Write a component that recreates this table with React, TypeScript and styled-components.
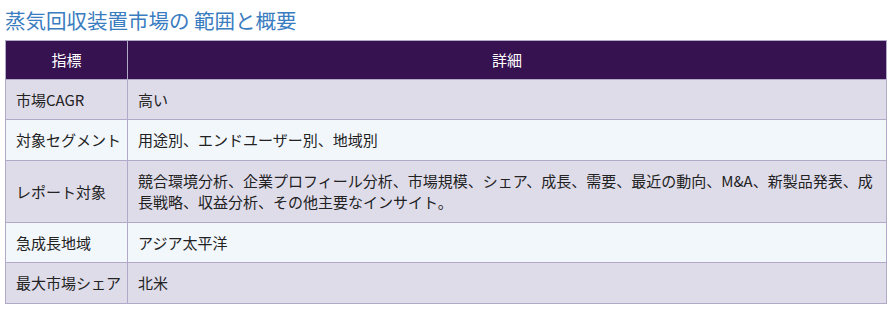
import React from "react";
import styled, { createGlobalStyle } from "styled-components";

const GlobalStyle = createGlobalStyle`
  body {
    margin: 0;
    background: #ffffff;
    font-family: "Noto Sans CJK JP", "Liberation Sans", sans-serif;
  }
`;

const Page = styled.div`
  padding: 8px 8px 0 5px;
`;

const Title = styled.h2`
  margin: 0 0 8px 0;
  font-size: 20.5px;
  font-weight: normal;
  line-height: 24px;
  color: #3a7cc0;
`;

const Table = styled.table`
  width: 100%;
  border-collapse: collapse;
  font-size: 15px;
  color: #222222;
`;

const HeadCell = styled.th<{ width?: number }>`
  background: #371250;
  color: #ffffff;
  font-weight: normal;
  text-align: center;
  padding: 8.25px 10px;
  line-height: 21.45px;
  border: 1px solid #b2a9c9;
  width: ${({ width }) => (width ? `${width}px` : "auto")};
`;

const Row = styled.tr<{ alt: boolean }>`
  background: ${({ alt }) => (alt ? "#f2f7fc" : "#dfdcea")};
`;

const Cell = styled.td<{ label?: boolean }>`
  padding: ${({ label }) => (label ? "9px 6px 9px 10px" : "9px 10px")};
  line-height: 21.45px;
  border: 1px solid #b2a9c9;
  vertical-align: middle;
  text-align: left;
  white-space: ${({ label }) => (label ? "nowrap" : "normal")};
`;

const rows: [string, string][] = [
  ["市場CAGR", "高い"],
  ["対象セグメント", "用途別、エンドユーザー別、地域別"],
  [
    "レポート対象",
    "競合環境分析、企業プロフィール分析、市場規模、シェア、成長、需要、最近の動向、M&A、新製品発表、成長戦略、収益分析、その他主要なインサイト。",
  ],
  ["急成長地域", "アジア太平洋"],
  ["最大市場シェア", "北米"],
];

const App: React.FC = () => (
  <>
    <GlobalStyle />
    <Page>
      <Title>蒸気回収装置市場の 範囲と概要</Title>
      <Table>
        <thead>
          <tr>
            <HeadCell width={101}>指標</HeadCell>
            <HeadCell>詳細</HeadCell>
          </tr>
        </thead>
        <tbody>
          {rows.map(([label, detail], i) => (
            <Row key={label} alt={i % 2 === 1}>
              <Cell label>{label}</Cell>
              <Cell>{detail}</Cell>
            </Row>
          ))}
        </tbody>
      </Table>
    </Page>
  </>
);

export default App;
